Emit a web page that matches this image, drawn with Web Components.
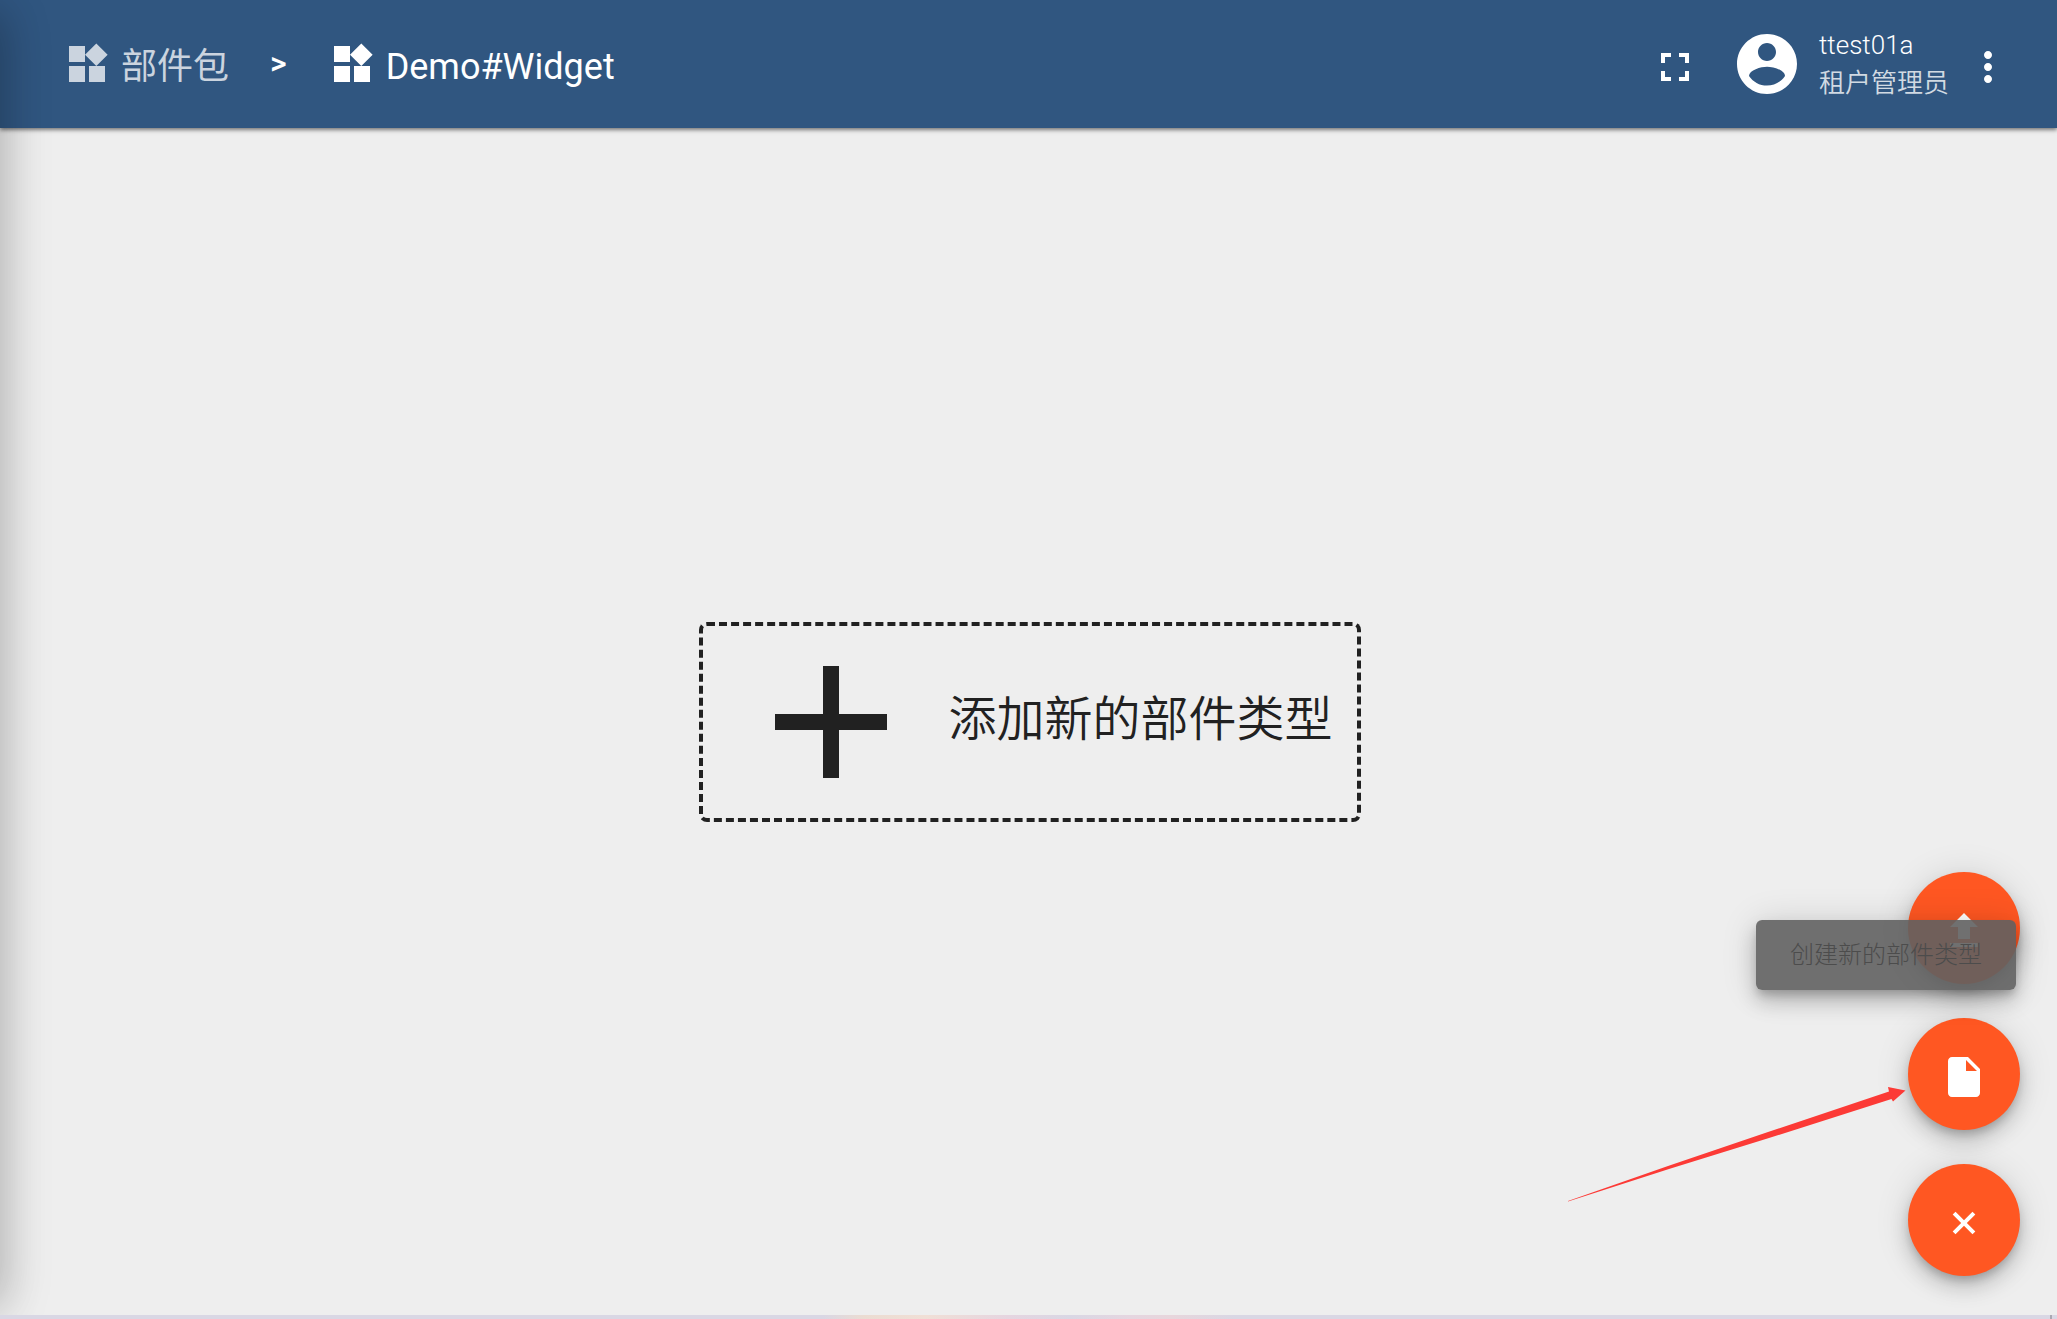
<!DOCTYPE html>
<html lang="zh-CN">
<head>
<meta charset="utf-8">
<meta name="viewport" content="width=device-width, initial-scale=1">
<title>Demo#Widget</title>
<style>
  html, body {
    height: 100%;
    margin: 0;
  }

  body {
    font-family: Roboto, "Noto Sans CJK SC", sans-serif;
    overflow: hidden;
  }
</style>
</head>
<body>
<widget-library-page></widget-library-page>

<script>
const ICONS = {
  widgets: '<path d="M13 13v8h8v-8h-8zM3 21h8v-8H3v8zM3 3v8h8V3H3zm13.66-1.31L11 7.34 16.66 13l5.66-5.66-5.66-5.65z"/>',
  fullscreen: '<path d="M7 14H5v5h5v-2H7v-3zm-2-4h2V7h3V5H5v5zm12 7h-3v2h5v-5h-2v3zM14 5v2h3v3h2V5h-5z"/>',
  account: '<path d="M12 2C6.48 2 2 6.48 2 12s4.48 10 10 10 10-4.48 10-10S17.52 2 12 2zm0 3c1.66 0 3 1.34 3 3s-1.34 3-3 3-3-1.34-3-3 1.34-3 3-3zm0 14.2c-2.5 0-4.71-1.28-6-3.22.03-1.99 4-3.08 6-3.08 1.99 0 5.97 1.09 6 3.08-1.29 1.94-3.5 3.22-6 3.22z"/>',
  more: '<path d="M12 8c1.1 0 2-.9 2-2s-.9-2-2-2-2 .9-2 2 .9 2 2 2zm0 2c-1.1 0-2 .9-2 2s.9 2 2 2 2-.9 2-2-.9-2-2-2zm0 6c-1.1 0-2 .9-2 2s.9 2 2 2 2-.9 2-2-.9-2-2-2z"/>',
  add: '<path d="M19 13h-6v6h-2v-6H5v-2h6V5h2v6h6v2z"/>',
  close: '<path transform="rotate(45 12 12)" d="M19 13h-6v6h-2v-6H5v-2h6V5h2v6h6v2z"/>',
  upload: '<path d="M9 16h6v-6h4l-7-7-7 7h4zm-4 2h14v2H5z"/>',
  file: '<path d="M6 2c-1.1 0-1.99.9-1.99 2L4 20c0 1.1.89 2 1.99 2H18c1.1 0 2-.9 2-2V8l-6-6H6zm7 7V3.5L18.5 9H13z"/>'
};

class AppIcon extends HTMLElement {
  constructor() {
    super();
    this.attachShadow({ mode: "open" });
  }

  connectedCallback() {
    this.shadowRoot.innerHTML = `
      <style>
        :host {
          display: block;
          flex: none;
          width: var(--icon-size, 48px);
          height: var(--icon-size, 48px);
        }

        svg {
          display: block;
          width: 100%;
          height: 100%;
          fill: currentColor;
        }
      </style>
      <svg viewBox="0 0 24 24" aria-hidden="true">${ICONS[this.getAttribute("name")] || ""}</svg>
    `;
  }
}

class BreadcrumbLink extends HTMLElement {
  constructor() {
    super();
    this.attachShadow({ mode: "open" });
  }

  connectedCallback() {
    this.shadowRoot.innerHTML = `
      <style>
        :host {
          display: block;
          color: rgba(255, 255, 255, 0.75);
        }

        :host([current]) {
          color: #fff;
        }

        a {
          display: flex;
          align-items: center;
          gap: 10px;
          color: inherit;
          text-decoration: none;
          white-space: nowrap;
        }

        span {
          font-size: 36px;
          line-height: 48px;
          padding-top: 6px;
        }
      </style>
      <a href="#"><app-icon name="widgets"></app-icon><span><slot></slot></span></a>
    `;
  }
}

class UserInfo extends HTMLElement {
  constructor() {
    super();
    this.attachShadow({ mode: "open" });
  }

  connectedCallback() {
    this.shadowRoot.innerHTML = `
      <style>
        :host {
          display: flex;
          align-items: center;
          gap: 16px;
          --icon-size: 72px;
        }

        .text {
          display: flex;
          flex-direction: column;
          font-size: 26px;
          font-weight: 300;
          line-height: 38px;
          white-space: nowrap;
        }

        .role {
          color: rgba(255, 255, 255, 0.8);
          font-weight: 350;
        }
      </style>
      <app-icon name="account"></app-icon>
      <div class="text">
        <span>${this.getAttribute("name")}</span>
        <span class="role">${this.getAttribute("role-name")}</span>
      </div>
    `;
  }
}

class AppToolbar extends HTMLElement {
  constructor() {
    super();
    this.attachShadow({ mode: "open" });
  }

  connectedCallback() {
    this.shadowRoot.innerHTML = `
      <style>
        :host {
          display: flex;
          align-items: center;
          justify-content: space-between;
          box-sizing: border-box;
          height: 128px;
          padding: 0 45px 0 63px;
          background: #305680;
          color: #fff;
          box-shadow: 0 2px 4px rgba(0, 0, 0, 0.5);
        }

        nav, .actions {
          display: flex;
          align-items: center;
        }

        nav {
          gap: 41px;
        }

        .separator {
          font-size: 32px;
          font-weight: 500;
          line-height: 48px;
          padding-bottom: 2px;
        }

        button {
          display: block;
          padding: 0;
          border: 0;
          background: none;
          color: inherit;
          cursor: pointer;
        }

        .fullscreen {
          margin: 6px 32px 0 0;
        }

        .menu {
          margin: 6px 0 0 15px;
        }
      </style>
      <nav>
        <breadcrumb-link>部件包</breadcrumb-link>
        <span class="separator">&gt;</span>
        <breadcrumb-link current>Demo#Widget</breadcrumb-link>
      </nav>
      <div class="actions">
        <button class="fullscreen" aria-label="全屏"><app-icon name="fullscreen"></app-icon></button>
        <user-info name="ttest01a" role-name="租户管理员"></user-info>
        <button class="menu" aria-label="菜单"><app-icon name="more"></app-icon></button>
      </div>
    `;
  }
}

class AddTypeButton extends HTMLElement {
  constructor() {
    super();
    this.attachShadow({ mode: "open" });
  }

  connectedCallback() {
    this.shadowRoot.innerHTML = `
      <style>
        :host {
          display: block;
          --icon-size: 192px;
        }

        button {
          display: flex;
          align-items: center;
          gap: 21px;
          padding: 0 24px 0 32px;
          border: 4px dashed #212121;
          border-radius: 8px;
          background: none;
          color: #212121;
          font: 350 48px/64px Roboto, "Noto Sans CJK SC", sans-serif;
          white-space: nowrap;
          cursor: pointer;
        }

        span {
          padding-bottom: 4px;
        }
      </style>
      <button><app-icon name="add"></app-icon><span><slot></slot></span></button>
    `;
  }
}

class FabButton extends HTMLElement {
  constructor() {
    super();
    this.attachShadow({ mode: "open" });
  }

  connectedCallback() {
    this.shadowRoot.innerHTML = `
      <style>
        :host {
          display: block;
        }

        button {
          display: grid;
          place-items: center;
          box-sizing: border-box;
          width: 112px;
          height: 112px;
          padding: 6px 0 0;
          border: 0;
          border-radius: 50%;
          background: #ff5722;
          color: #fff;
          box-shadow: 0 6px 10px -2px rgba(0, 0, 0, 0.2),
            0 12px 20px rgba(0, 0, 0, 0.14),
            0 2px 36px rgba(0, 0, 0, 0.12);
          cursor: pointer;
        }
      </style>
      <button aria-label="${this.getAttribute("label")}"><app-icon name="${this.getAttribute("icon")}"></app-icon></button>
    `;
  }
}

class HintTooltip extends HTMLElement {
  constructor() {
    super();
    this.attachShadow({ mode: "open" });
  }

  connectedCallback() {
    this.shadowRoot.innerHTML = `
      <style>
        :host {
          display: block;
          padding: 16px 34px;
          border-radius: 6px;
          background: rgba(97, 97, 97, 0.9);
          color: #4c4c4c;
          font-size: 24px;
          font-weight: 200;
          line-height: 38px;
          white-space: nowrap;
          box-shadow: 0 6px 10px -2px rgba(0, 0, 0, 0.2),
            0 12px 20px rgba(0, 0, 0, 0.18),
            0 2px 36px rgba(0, 0, 0, 0.14);
        }
      </style>
      <slot></slot>
    `;
  }
}

class WidgetLibraryPage extends HTMLElement {
  constructor() {
    super();
    this.attachShadow({ mode: "open" });
  }

  connectedCallback() {
    this.shadowRoot.innerHTML = `
      <style>
        :host {
          display: flex;
          flex-direction: column;
          position: relative;
          height: 100%;
          overflow: hidden;
          background: #eee;
        }

        app-toolbar {
          flex: none;
          z-index: 1;
        }

        main {
          flex: 1;
          display: grid;
          place-items: center;
          padding-left: 3px;
        }

        /* closed side menu, only its shadow is seen */
        .sidenav {
          position: absolute;
          top: 16px;
          bottom: 16px;
          right: 100%;
          width: 400px;
          z-index: 2;
          box-shadow: 0 0 48px 4px rgba(0, 0, 0, 0.16),
            0 0 40px 2px rgba(0, 0, 0, 0.14);
        }

        .fabs {
          position: absolute;
          right: 37px;
          bottom: 43px;
          display: flex;
          flex-direction: column;
          gap: 34px;
        }

        .item {
          position: relative;
        }

        hint-tooltip {
          position: absolute;
          right: 4px;
          bottom: calc(100% + 28px);
        }

        .arrow {
          position: absolute;
          right: 114px;
          top: 68px;
          width: 340px;
          height: 118px;
          fill: #fc3a36;
          pointer-events: none;
        }

        .strip {
          position: relative;
          z-index: 3;
          flex: none;
          height: 4px;
          background: linear-gradient(90deg, #d9d7e4 40%, #ebdcd2 42%, #f0dfd6 45%, #e5d5e0 49%, #d9d7e4 52%, #e5d6e0 55%, #e7d6dc 57%, #d9d7e4 60%);
        }

        .strip::after {
          content: "";
          position: absolute;
          right: 5px;
          width: 2px;
          height: 100%;
          background: #aaa8b2;
        }
      </style>
      <app-toolbar></app-toolbar>
      <main>
        <add-type-button>添加新的部件类型</add-type-button>
      </main>
      <div class="strip"></div>
      <div class="sidenav"></div>
      <div class="fabs">
        <fab-button icon="upload" label="导入部件类型"></fab-button>
        <div class="item">
          <fab-button icon="file" label="创建新的部件类型"></fab-button>
          <hint-tooltip>创建新的部件类型</hint-tooltip>
          <svg class="arrow" viewBox="0 0 340 118" aria-hidden="true">
            <path d="M2 115 102 80 202 46 323 5.500 322 1 339.500 4.500 327 15.500 325.500 13 203 52 103 83 2 115.500z"/>
          </svg>
        </div>
        <fab-button icon="close" label="关闭"></fab-button>
      </div>
    `;
  }
}

customElements.define("app-icon", AppIcon);
customElements.define("breadcrumb-link", BreadcrumbLink);
customElements.define("user-info", UserInfo);
customElements.define("app-toolbar", AppToolbar);
customElements.define("add-type-button", AddTypeButton);
customElements.define("fab-button", FabButton);
customElements.define("hint-tooltip", HintTooltip);
customElements.define("widget-library-page", WidgetLibraryPage);
</script>
</body>
</html>
